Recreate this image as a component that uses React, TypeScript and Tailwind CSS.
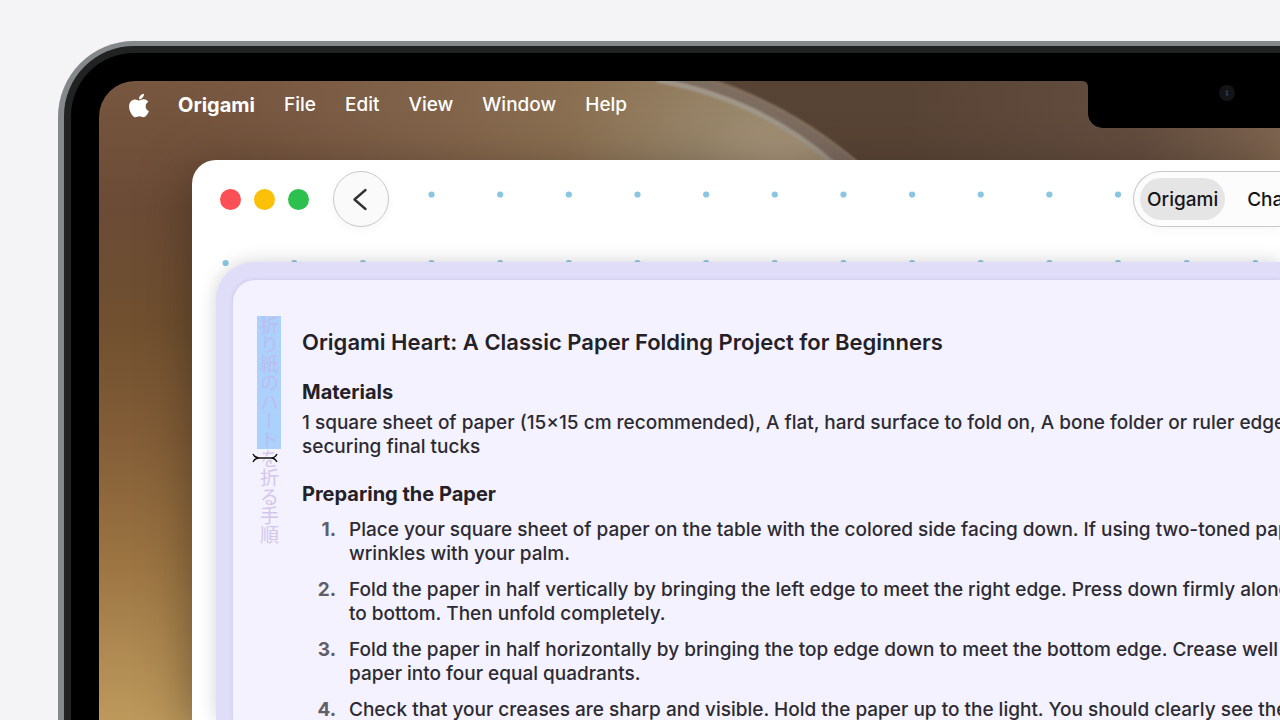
import React from 'react';
import { FaApple } from 'react-icons/fa';

const menus = ['File', 'Edit', 'View', 'Window', 'Help'];

const steps = [
  [
    'Place your square sheet of paper on the table with the colored side facing down. If using two-toned paper,',
    'wrinkles with your palm.',
  ],
  [
    'Fold the paper in half vertically by bringing the left edge to meet the right edge. Press down firmly along',
    'to bottom. Then unfold completely.',
  ],
  [
    'Fold the paper in half horizontally by bringing the top edge down to meet the bottom edge. Crease well',
    'paper into four equal quadrants.',
  ],
  ['Check that your creases are sharp and visible. Hold the paper up to the light. You should clearly see the'],
];

const Wallpaper: React.FC = () => (
  <svg className="absolute inset-0 h-full w-full" aria-hidden="true">
    <defs>
      <radialGradient id="glow" gradientUnits="userSpaceOnUse" cx="680" cy="110" r="620">
        <stop offset="0" stopColor="#ae9c83" />
        <stop offset="0.15" stopColor="#98866a" />
        <stop offset="0.35" stopColor="#8b7052" />
        <stop offset="0.7" stopColor="#80614a" stopOpacity="0.7" />
        <stop offset="1" stopColor="#7a5a42" stopOpacity="0" />
      </radialGradient>
      <linearGradient id="shade" gradientUnits="userSpaceOnUse" x1="600" y1="0" x2="1190" y2="40">
        <stop offset="0" stopColor="#574333" />
        <stop offset="0.35" stopColor="#584435" />
        <stop offset="0.75" stopColor="#634d3f" />
        <stop offset="1" stopColor="#7f6650" />
      </linearGradient>
      <filter id="soft" x="-10%" y="-10%" width="120%" height="120%">
        <feGaussianBlur stdDeviation="1.2" />
      </filter>
    </defs>
    <rect width="100%" height="80" fill="url(#glow)" />
    <path d="M600 0Q694 26 760 82H4000V0Z" fill="url(#shade)" />
    <path d="M558 0Q660 18 733 82H759Q696 27 614 0Z" fill="#7d6c60" />
    <path d="M558 -1Q662 18 736 84" fill="none" stroke="#a0988a" strokeWidth="5" filter="url(#soft)" />
    <path d="M612 -1Q696 27 760 83" fill="none" stroke="#84705f" strokeWidth="3" filter="url(#soft)" />
  </svg>
);

const MenuBar: React.FC = () => (
  <nav className="relative flex h-12 items-center gap-[29px] pl-[29px] text-[19px] leading-6 font-medium text-white">
    <button type="button" aria-label="Apple menu" className="-mr-px">
      <FaApple className="h-[27px] w-[22px]" />
    </button>
    <button type="button" className="text-[20px] font-bold">Origami</button>
    {menus.map((menu) => (
      <button key={menu} type="button">{menu}</button>
    ))}
  </nav>
);

const Notch: React.FC = () => (
  <div className="absolute top-0 right-0 left-[989px] h-[47px] rounded-bl-[15px] bg-black">
    <svg className="absolute top-0 -left-[6px] h-[6px] w-[6px]" viewBox="0 0 6 6" aria-hidden="true">
      <path d="M0 0H6V6Q6 0 0 0Z" fill="#000" />
    </svg>
    <svg className="absolute top-1 left-[131px] h-4 w-4" viewBox="0 0 16 16" aria-hidden="true">
      <circle cx="8" cy="8" r="8" fill="#141416" />
      <circle cx="8" cy="6.5" r="1.3" fill="#24405f" />
      <circle cx="8" cy="9.5" r="1.3" fill="#24405f" />
    </svg>
  </div>
);

// dotted canvas behind the toolbar and the card
const Dots: React.FC = () => (
  <svg className="absolute inset-0 h-full w-full" aria-hidden="true">
    {[34.5, 103].map((cy) =>
      Array.from({ length: 40 }, (_, i) => (
        <circle key={`${cy}-${i}`} cx={33.6 + i * 68.65} cy={cy} r="3.1" fill="#8ac6e2" />
      ))
    )}
  </svg>
);

const Toolbar: React.FC = () => (
  <div className="relative flex h-[67px] items-center pt-[11px] pl-7">
    <div className="flex shrink-0 gap-[13px]">
      <button type="button" aria-label="Close" className="h-[21px] w-[21px] rounded-full bg-[#fc5056]" />
      <button type="button" aria-label="Minimize" className="h-[21px] w-[21px] rounded-full bg-[#fbc008]" />
      <button type="button" aria-label="Zoom" className="h-[21px] w-[21px] rounded-full bg-[#2ec04f]" />
    </div>
    <button
      type="button"
      aria-label="Back"
      className="ml-6 flex h-14 w-14 shrink-0 items-center justify-center rounded-full border border-[#c8c8c8] bg-[#fafafa] shadow-[0_3px_10px_rgba(0,0,0,0.04)]"
    >
      <svg className="h-6 w-6" viewBox="0 0 24 24" fill="none" aria-hidden="true">
        <path d="M16.500 3L5.500 12.500L16.500 22" stroke="#333" strokeWidth="2.4" strokeLinecap="round" strokeLinejoin="round" />
      </svg>
    </button>
    <div className="ml-[744px] flex h-14 min-w-0 flex-1 items-center overflow-hidden rounded-l-full border border-r-0 border-[#c8c8c8] bg-[#fcfcfc] pl-[6px] text-[19px] leading-6 font-medium text-[#151515] shadow-[0_3px_10px_rgba(0,0,0,0.04)]">
      <button type="button" className="h-[42px] shrink-0 rounded-full bg-[#e5e5e5] px-[7px] pt-[2px]">Origami</button>
      <button type="button" className="ml-[22px] shrink-0 pt-[2px]">Chat</button>
    </div>
  </div>
);

const VerticalTitle: React.FC = () => (
  <div className="relative mt-9 w-6 shrink-0">
    <p
      lang="ja"
      className="font-['Noto_Sans_CJK_JP',sans-serif] text-[19px] leading-6 whitespace-nowrap text-[#d3c6ec] [writing-mode:vertical-rl]"
    >
      <span className="inline-block bg-[#abd1fc] text-[#bcbdee]">折り紙のハート</span>を折る手順
    </p>
    <svg className="absolute top-[137px] -left-[5px] h-[10px] w-[26px]" viewBox="0 0 26 10" fill="none" aria-hidden="true">
      <path d="M1 1Q3 5 7 5H19Q23 5 25 1M1 9Q3 5 7 5M25 9Q23 5 19 5" stroke="#fff" strokeWidth="3" />
      <path d="M1 1Q3 5 7 5H19Q23 5 25 1M1 9Q3 5 7 5M25 9Q23 5 19 5" stroke="#111" strokeWidth="1.5" />
    </svg>
  </div>
);

const Article: React.FC = () => (
  <article className="pt-[46px] text-[19px] leading-6 whitespace-nowrap text-[#2c2a32]">
    <h1 className="text-[22px] leading-8 font-semibold text-[#232127]">
      Origami Heart: A Classic Paper Folding Project for Beginners
    </h1>
    <h2 className="mt-[22px] text-[20px] font-bold text-[#232127]">Materials</h2>
    <p className="mt-[7px] font-medium">
      1 square sheet of paper (15×15 cm recommended), A flat, hard surface to fold on, A bone folder or ruler edge
      <br />
      securing final tucks
    </p>
    <h2 className="mt-[23px] text-[20px] font-bold text-[#232127]">Preparing the Paper</h2>
    <ol className="mt-3 flex flex-col gap-3 font-medium">
      {steps.map((lines, i) => (
        <li key={i} className="flex gap-[13px]">
          <span className="w-[34px] text-right font-bold text-[#625e68]">{i + 1}.</span>
          <div>
            {lines.map((line) => (
              <p key={line}>{line}</p>
            ))}
          </div>
        </li>
      ))}
    </ol>
  </article>
);

const App: React.FC = () => {
  return (
    <div className="flex h-screen overflow-hidden bg-[#f4f4f6] pt-[41px] pl-[58px] font-['Inter','Noto_Sans_CJK_JP',sans-serif]">
      {/* Laptop frame */}
      <div className="flex min-w-0 flex-1 rounded-tl-[76px] bg-[#85888a] pt-[5px] pl-[6px]">
        <div className="flex min-w-0 flex-1 rounded-tl-[70px] bg-[#212222] pt-[7px] pl-[7px]">
          <div className="flex min-w-0 flex-1 rounded-tl-[63px] bg-black pt-7 pl-7">
            {/* Desktop */}
            <div className="relative flex min-w-0 flex-1 flex-col overflow-hidden rounded-tl-[36px] bg-[linear-gradient(to_bottom,#77573f,#6b4b35_20%,#70502f_38%,#825d37_55%,#9b7442_75%,#bd995c)]">
              <Wallpaper />
              <MenuBar />
              <Notch />
              {/* Window */}
              <main className="relative mt-[31px] ml-[93px] flex min-h-0 flex-1 flex-col rounded-tl-[24px] bg-white shadow-[0_12px_50px_rgba(40,30,20,0.5)]">
                <Dots />
                <Toolbar />
                <div className="relative mt-[35px] ml-6 flex min-h-0 min-w-0 flex-1 rounded-tl-[38px] bg-[#dfddf8] pt-[18px] pl-[17px] shadow-[0_0_18px_rgba(0,0,0,0.18)]">
                  <div className="flex min-w-0 flex-1 gap-[21px] overflow-hidden rounded-tl-[22px] bg-[#f4f2fe] pl-6 shadow-[0_0_4px_rgba(80,70,140,0.15)]">
                    <VerticalTitle />
                    <Article />
                  </div>
                </div>
              </main>
            </div>
          </div>
        </div>
      </div>
    </div>
  );
};

export default App;
